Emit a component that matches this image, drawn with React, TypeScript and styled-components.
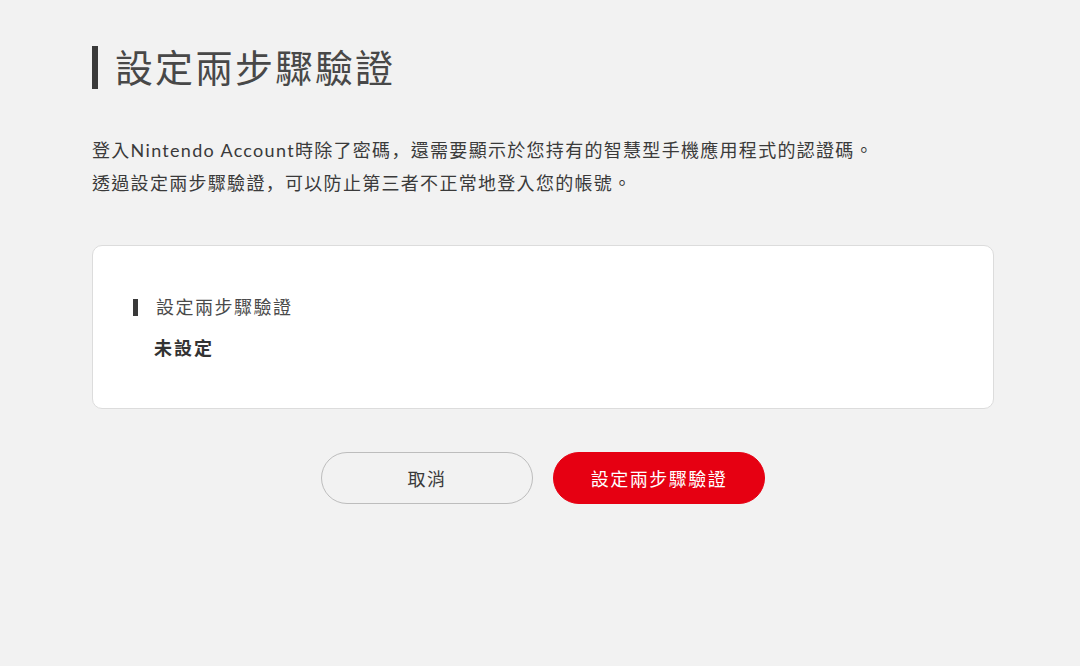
import React from "react";
import styled, { createGlobalStyle } from "styled-components";

const Global = createGlobalStyle`
  html, body { margin: 0; padding: 0; background: #f2f2f2; }
  body {
    font-family: Lato, "Noto Sans CJK TC", "Noto Sans", sans-serif;
    color: #333;
  }
`;

const Page = styled.main`
  width: 902px;
  margin-left: 92px;
  padding-top: 46px;
  padding-bottom: 40px;
`;

const TitleRow = styled.div`
  display: flex;
  align-items: center;
  gap: 17px;
  height: 43px;
`;

const Bar = styled.span<{ $w: number; $h: number }>`
  display: block;
  flex: none;
  width: ${(p) => p.$w}px;
  height: ${(p) => p.$h}px;
  background: #3a3a3a;
`;

const Title = styled.h1`
  margin: 0;
  font-size: 38px;
  font-weight: 400;
  line-height: 43px;
  letter-spacing: 2px;
  color: #484848;
`;

const Lead = styled.p`
  margin: 45px 0 0;
  font-size: 18px;
  line-height: 33px;
  letter-spacing: 1.3px;
  color: #3a3a3a;
`;

const Comma = styled.span`
  display: inline-block;
  line-height: 18px;
  font-family: "Noto Sans CJK SC", sans-serif;
`;

const Card = styled.section`
  margin-top: 45px;
  background: #fff;
  border: 1px solid #dcdcdc;
  border-radius: 10px;
  padding: 48px 40px 47px;
  display: flex;
  flex-direction: column;
  gap: 15px;
`;

const LabelRow = styled.div`
  display: flex;
  align-items: center;
  gap: 18px;
  height: 26px;
`;

const Label = styled.span`
  font-size: 18px;
  line-height: 26px;
  letter-spacing: 1.5px;
  color: #4a4a4a;
`;

const Value = styled.div`
  margin-left: 21px;
  font-size: 18px;
  font-weight: 700;
  line-height: 26px;
  letter-spacing: 2px;
  color: #333;
`;

const Actions = styled.div`
  margin-top: 43px;
  display: flex;
  justify-content: center;
  gap: 20px;
`;

const Button = styled.button<{ $primary?: boolean }>`
  width: 212px;
  height: 52px;
  border-radius: 26px;
  font-family: inherit;
  font-size: 18px;
  letter-spacing: 1.5px;
  cursor: pointer;
  border: 1px solid ${(p) => (p.$primary ? "#e60012" : "#bdbdbd")};
  background: ${(p) => (p.$primary ? "#e60012" : "transparent")};
  color: ${(p) => (p.$primary ? "#fff" : "#3a3a3a")};
`;

export default function App() {
  return (
    <>
      <Global />
      <Page>
        <TitleRow>
          <Bar $w={6} $h={43} />
          <Title>設定兩步驟驗證</Title>
        </TitleRow>
        <Lead>
          登入Nintendo Account時除了密碼<Comma>，</Comma>還需要顯示於您持有的智慧型手機應用程式的認證碼。
          <br />
          透過設定兩步驟驗證<Comma>，</Comma>可以防止第三者不正常地登入您的帳號。
        </Lead>
        <Card>
          <LabelRow>
            <Bar $w={5} $h={17} />
            <Label>設定兩步驟驗證</Label>
          </LabelRow>
          <Value>未設定</Value>
        </Card>
        <Actions>
          <Button>取消</Button>
          <Button $primary>設定兩步驟驗證</Button>
        </Actions>
      </Page>
    </>
  );
}
